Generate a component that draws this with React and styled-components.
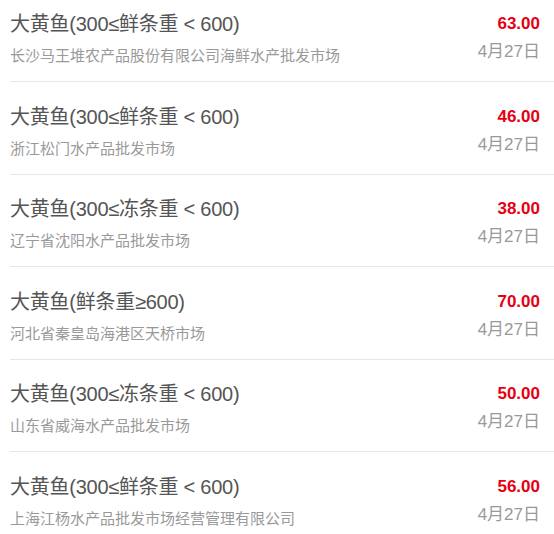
import React from "react";
import styled, { createGlobalStyle } from "styled-components";

const GlobalStyle = createGlobalStyle`
  body {
    margin: 0;
    background: #fff;
    font-family: "Liberation Sans", Arial, "Noto Sans CJK SC", sans-serif;
  }
`;

const List = styled.ul`
  list-style: none;
  margin: 0 0 0 10px;
  padding: 0;
`;

const Item = styled.li`
  display: flex;
  justify-content: space-between;
  align-items: flex-start;
  padding: 21.5px 14px 13px 0;
  border-bottom: 1px solid #e6e6e6;

  &:first-child {
    padding-top: 11px;
  }
  &:last-child {
    border-bottom: none;
  }
`;

const Info = styled.div`
  display: flex;
  flex-direction: column;
  gap: 7px;
`;

const Side = styled.div`
  display: flex;
  flex-direction: column;
  align-items: flex-end;
  gap: 3px;
`;

const Title = styled.div`
  font-size: 20px;
  line-height: 26px;
  letter-spacing: -0.25px;
  color: #555;
  white-space: nowrap;
`;

const Market = styled.div`
  font-size: 15px;
  line-height: 24px;
  color: #999;
  white-space: nowrap;
`;

const Price = styled.div`
  font-size: 17px;
  line-height: 26px;
  font-weight: bold;
  color: #e60012;
`;

const DateText = styled.div`
  font-size: 17px;
  line-height: 24px;
  color: #999;
`;

const rows = [
  { name: "大黄鱼(300≤鲜条重 < 600)", market: "长沙马王堆农产品股份有限公司海鲜水产批发市场", price: "63.00" },
  { name: "大黄鱼(300≤鲜条重 < 600)", market: "浙江松门水产品批发市场", price: "46.00" },
  { name: "大黄鱼(300≤冻条重 < 600)", market: "辽宁省沈阳水产品批发市场", price: "38.00" },
  { name: "大黄鱼(鲜条重≥600)", market: "河北省秦皇岛海港区天桥市场", price: "70.00" },
  { name: "大黄鱼(300≤冻条重 < 600)", market: "山东省威海水产品批发市场", price: "50.00" },
  { name: "大黄鱼(300≤鲜条重 < 600)", market: "上海江杨水产品批发市场经营管理有限公司", price: "56.00" },
];

export default function App() {
  return (
    <>
      <GlobalStyle />
      <List>
        {rows.map((r, i) => (
          <Item key={i}>
            <Info>
              <Title>{r.name}</Title>
              <Market>{r.market}</Market>
            </Info>
            <Side>
              <Price>{r.price}</Price>
              <DateText>4月27日</DateText>
            </Side>
          </Item>
        ))}
      </List>
    </>
  );
}
